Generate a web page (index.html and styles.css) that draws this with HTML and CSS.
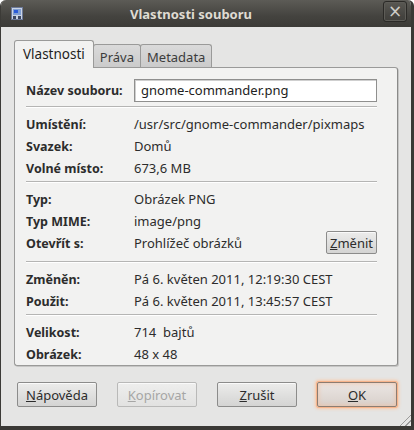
FILE: index.html
```html
<!DOCTYPE html>
<html lang="cs">
<head>
<meta charset="utf-8">
<link rel="stylesheet" href="styles.css">
</head>
<body>
<div class="window">
  <div class="titlebar">
    <svg class="appicon" width="12" height="13" viewBox="0 0 12 13">
      <rect x="0.5" y="0.5" width="11" height="12" fill="#c9d3e4" stroke="#6d7a99"/>
      <rect x="2" y="2" width="8" height="6" fill="#7f9ed3"/>
      <rect x="3" y="3" width="4" height="3" fill="#2a5bd7"/>
      <rect x="2" y="9" width="3" height="3" fill="#3b4660"/>
      <rect x="7" y="9" width="3" height="3" fill="#3b4660"/>
    </svg>
    <div class="title">Vlastnosti souboru</div>
    <div class="close">×</div>
  </div>
  <div class="client">
    <div class="notebook">
      <div class="tabs">
        <div class="tab active">Vlastnosti</div>
        <div class="tab">Práva</div>
        <div class="tab">Metadata</div>
      </div>
      <div class="page">
        <div class="namerow">
          <span class="label">Název souboru:</span>
          <div class="entry">gnome-commander.png</div>
        </div>
        <div class="sep first"></div>
        <div class="row"><span class="label">Umístění:</span><span class="value">/usr/src/gnome-commander/pixmaps</span></div>
        <div class="row"><span class="label">Svazek:</span><span class="value">Domů</span></div>
        <div class="row"><span class="label">Volné místo:</span><span class="value">673,6 MB</span></div>
        <div class="sep"></div>
        <div class="row"><span class="label">Typ:</span><span class="value">Obrázek PNG</span></div>
        <div class="row"><span class="label">Typ MIME:</span><span class="value">image/png</span></div>
        <div class="row withbtn"><span class="label">Otevřít s:</span><span class="value">Prohlížeč obrázků</span><button class="btn small"><u>Z</u>měnit</button></div>
        <div class="sep"></div>
        <div class="row"><span class="label">Změněn:</span><span class="value">Pá 6. květen 2011, 12:19:30 CEST</span></div>
        <div class="row"><span class="label">Použit:</span><span class="value">Pá 6. květen 2011, 13:45:57 CEST</span></div>
        <div class="sep"></div>
        <div class="row"><span class="label">Velikost:</span><span class="value">714&nbsp; bajtů</span></div>
        <div class="row"><span class="label">Obrázek:</span><span class="value">48 x 48</span></div>
      </div>
    </div>
    <div class="buttons">
      <button class="btn"><u>N</u>ápověda</button>
      <button class="btn disabled"><u>K</u>opírovat</button>
      <button class="btn"><u>Z</u>rušit</button>
      <button class="btn default"><u>O</u>K</button>
    </div>
  </div>
  <div class="grip"></div>
</div>
</body>
</html>
```

FILE: styles.css
```css
html, body {
  margin: 0;
  padding: 0;
  background: #ffffff;
}
body {
  font-family: "Noto Sans", "DejaVu Sans", sans-serif;
  font-size: 12.5px;
  color: #2c2c2c;
}
.window {
  width: 414px;
  height: 430px;
  box-sizing: border-box;
  background: #e5e5e4;
  border-left: 1px solid #3c3b37;
  border-right: 3px solid #3a3935;
  border-bottom: 4px solid #3a3935;
  border-radius: 6px 6px 0 0;
  display: flex;
  flex-direction: column;
  position: relative;
  overflow: hidden;
}
.titlebar {
  height: 27px;
  flex: none;
  background: linear-gradient(#5c5b56, #44433f 60%, #3c3b37);
  display: flex;
  align-items: center;
  padding: 0 4px 0 10px;
  position: relative;
}
.appicon { flex: none; }
.title {
  flex: 1;
  text-align: center;
  font-weight: bold;
  font-size: 13px;
  color: #dfdbd2;
  margin-left: -12px;
  margin-right: 12px;
}
.close {
  width: 22px;
  height: 19px;
  border: 1px solid #2b2a27;
  border-radius: 3px;
  box-shadow: inset 0 0 0 1px #5d5c57;
  color: #cfcdc8;
  text-align: center;
  font-size: 17px;
  line-height: 18px;
  font-family: "DejaVu Sans", sans-serif;
  margin-top: -5px;
}
.client {
  flex: 1;
  padding: 13px 13px 0 13px;
  display: flex;
  flex-direction: column;
}
.tabs {
  display: flex;
  align-items: flex-end;
  height: 27px;
  position: relative;
  z-index: 1;
}
.tab {
  height: 23px;
  box-sizing: border-box;
  padding: 0 6px;
  border: 1px solid #9a9a99;
  border-bottom: none;
  border-radius: 3px 3px 0 0;
  background: linear-gradient(#dadada, #cbcbcb);
  line-height: 24px;
  font-size: 13px;
  color: #3c3c3c;
}
.tab + .tab { margin-left: -1px; }
.tab.active {
  height: 28px;
  margin-bottom: -1px;
  padding: 0 8px;
  background: #f2f2f1;
  color: #1e1e1e;
  line-height: 27px;
  font-size: 13.5px;
}
.page {
  background: #f2f2f1;
  border: 1px solid #9a9a99;
  border-right-color: #8a8a89;
  box-shadow: 1px 1px 0 #c6c6c5;
  border-radius: 0 3px 3px 3px;
  height: 299px;
  box-sizing: border-box;
  padding: 10px 20px 0 11px;
}
.label {
  width: 108px;
  flex: none;
  font-weight: bold;
  color: #2c2c2c;
}
.namerow {
  display: flex;
  align-items: center;
  height: 24px;
}
.entry {
  flex: 1;
  height: 23px;
  box-sizing: border-box;
  border: 1px solid #8f8f8e;
  box-shadow: inset 1px 1px 0 #cfcfcf;
  background: #ffffff;
  padding: 0 6px;
  line-height: 21px;
  font-size: 13px;
  color: #222;
}
.sep {
  height: 1px;
  background: #b5b5b4;
  border-bottom: 1px solid #ffffff;
  margin: 2px 0 5px;
}
.sep.first { margin-top: 4px; }
.row {
  display: flex;
  align-items: center;
  height: 22px;
}
.value {
  flex: 1;
  font-size: 13px;
  color: #2c2c2c;
}
.row.withbtn { margin-bottom: 7px; }
.btn {
  font-family: inherit;
  font-size: 13px;
  color: #2c2c2c;
  width: 80px;
  height: 25px;
  box-sizing: border-box;
  border: 1px solid #8c8c8b;
  border-radius: 2px;
  background: linear-gradient(#ececeb, #d4d4d3);
  box-shadow: inset 0 1px 0 #fafafa;
  padding: 0;
}
.btn.small {
  width: 51px;
  height: 23px;
  margin-top: -1px;
}
.btn.disabled {
  color: #a6a6a5;
  border-color: #b9b9b8;
  background: linear-gradient(#eeeeed, #e2e2e1);
}
.btn.default {
  border-color: #8c7d72;
  box-shadow: 0 0 0 1px #f7b48b, 0 0 3px 2px #f9c9a8, inset 0 0 5px #f1c1a3;
  background: linear-gradient(#ebe6e3, #d8d0cb);
}
.buttons {
  display: flex;
  gap: 20px;
  padding: 16px 0 0 3px;
}
.grip {
  position: absolute;
  right: 0;
  bottom: 0;
  width: 13px;
  height: 13px;
  background: repeating-linear-gradient(135deg, transparent 0 2px, #9b9b9a 2px 3px, transparent 3px 4px);
  clip-path: polygon(100% 0, 100% 100%, 0 100%);
}
```
